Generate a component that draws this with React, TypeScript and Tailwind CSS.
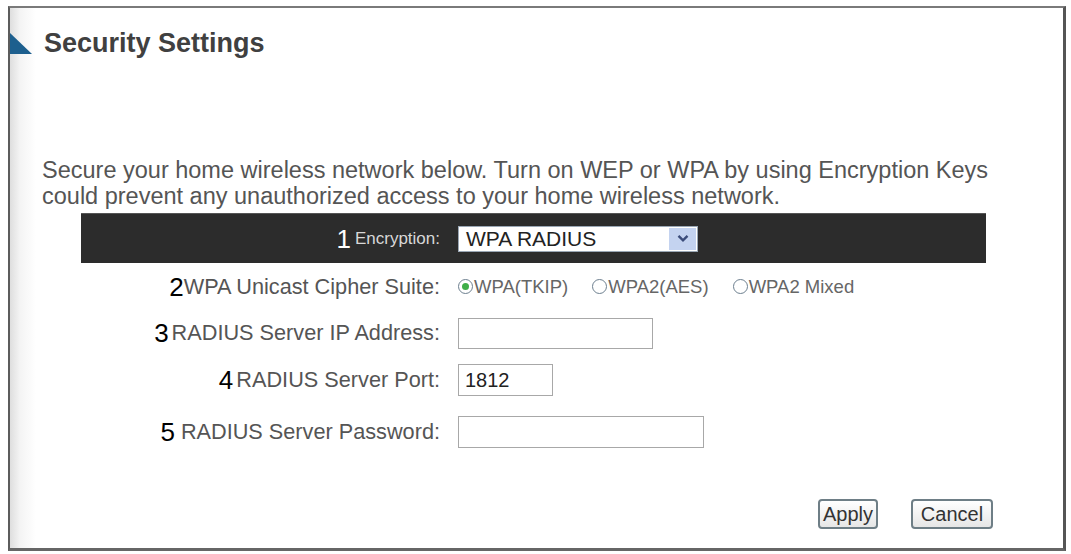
import React from "react";

const font = { fontFamily: '"Liberation Sans", Arial, sans-serif' };

function Radio({ checked, label }: { checked?: boolean; label: string }) {
  return (
    <span className="flex items-center">
      <span className="relative flex h-[15px] w-[15px] items-center justify-center rounded-full border border-[#6d7f8f] bg-white">
        {checked && <span className="h-[7px] w-[7px] rounded-full bg-[#3fae49]" />}
      </span>
      <span className="ml-[1px] text-[18.5px] text-[#666]">{label}</span>
    </span>
  );
}

function Row({
  num,
  label,
  children,
  h,
  numGap = "ml-[3px]",
}: {
  num: string;
  label: string;
  children: React.ReactNode;
  h: string;
  numGap?: string;
}) {
  return (
    <div className={`flex items-center ${h}`}>
      <div className="flex w-[359px] items-center justify-end">
        <span className="text-[26px] leading-none text-black">{num}</span>
        <span className={`${numGap} text-[21.7px] leading-none text-[#555]`}>{label}</span>
      </div>
      <div className="ml-[18px] flex items-center">{children}</div>
    </div>
  );
}

export default function App() {
  return (
    <div className="h-[554px] w-[1071px] overflow-hidden bg-white" style={font}>
      <div className="ml-[8px] mt-[6px] h-[545px] w-[1058px] border-b-[3px] border-l-[2px] border-r-[3px] border-t-[2px] border-b-[#666] border-l-[#5c5c5c] border-r-[#555] border-t-[#7a7a7a] bg-[linear-gradient(to_right,#dedede_0px,#f4f4f4_10px,#ffffff_26px)]">
        <div className="mt-[22px] flex items-center">
          <svg width="22" height="21" viewBox="0 0 22 21" className="shrink-0">
            <polygon points="0,0 22,21 0,21" fill="#1d5f8e" />
          </svg>
          <h1 className="ml-[12px] text-[27px] font-bold leading-none tracking-[0px] text-[#404040]">
            Security Settings
          </h1>
        </div>

        <p className="ml-[32px] mt-[100px] text-[23.5px] leading-[26px] text-[#555]">
          Secure your home wireless network below. Turn on WEP or WPA by using Encryption Keys
          <br />
          could prevent any unauthorized access to your home wireless network.
        </p>

        <div className="ml-[71px] mt-[4px] w-[905px]">
          <div className="flex h-[50px] items-center border-t border-[#555] bg-[#2c2c2c]">
            <div className="flex w-[359px] items-center justify-end">
              <span className="text-[26px] leading-none text-white">1</span>
              <span className="ml-[4px] text-[17px] leading-none text-[#d8d8d8]">Encryption:</span>
            </div>
            <div className="ml-[18px] flex h-[26px] w-[240px] items-center justify-between border border-[#9aa7b5] bg-white">
              <span className="ml-[7px] text-[21px] leading-none text-[#222]">WPA RADIUS</span>
              <span className="mr-[1px] flex h-[22px] w-[27px] items-center justify-center bg-[#c4d3f0]">
                <svg width="12" height="9" viewBox="0 0 12 9">
                  <polyline points="1.5,1.8 6,6.3 10.5,1.8" fill="none" stroke="#3b4c7a" strokeWidth="2.4" />
                </svg>
              </span>
            </div>
          </div>

          <Row num="2" label="WPA Unicast Cipher Suite:" h="h-[47px]" numGap="ml-0">
            <div className="flex items-center gap-[24px]">
              <Radio checked label="WPA(TKIP)" />
              <Radio label="WPA2(AES)" />
              <Radio label="WPA2 Mixed" />
            </div>
          </Row>

          <Row num="3" label="RADIUS Server IP Address:" h="h-[46px]">
            <div className="h-[31px] w-[195px] border border-[#a8a8a8] bg-white" />
          </Row>

          <Row num="4" label="RADIUS Server Port:" h="h-[48px]">
            <div className="flex h-[32px] w-[95px] items-center border border-[#a8a8a8] bg-white pl-[6px] text-[20px] text-[#222]">
              1812
            </div>
          </Row>

          <Row num="5" label="RADIUS Server Password:" h="h-[56px]" numGap="ml-[6px]">
            <div className="h-[32px] w-[246px] border border-[#a8a8a8] bg-white" />
          </Row>
        </div>

        <div className="mr-[70px] mt-[39px] flex justify-end gap-[33px]">
          <button className="flex h-[30px] w-[60px] items-center justify-center rounded-[4px] border-2 border-[#6e7e86] bg-[linear-gradient(to_bottom,#ffffff,#e6e6e6)] text-[20px] leading-none text-[#333]">
            Apply
          </button>
          <button className="flex h-[30px] w-[82px] items-center justify-center rounded-[4px] border-2 border-[#6e7e86] bg-[linear-gradient(to_bottom,#ffffff,#e6e6e6)] text-[20px] leading-none text-[#333]">
            Cancel
          </button>
        </div>
      </div>
    </div>
  );
}
